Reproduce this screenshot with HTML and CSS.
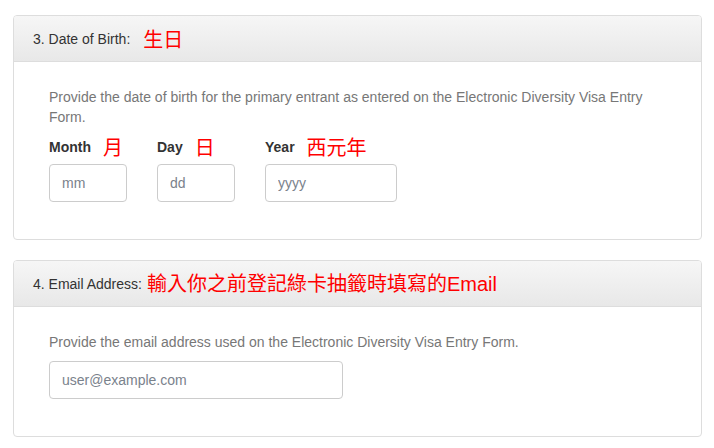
FILE: index.html
```html
<!DOCTYPE html>
<html lang="en">
  <head>
    <meta charset="UTF-8" />
    <meta name="viewport" content="width=device-width, initial-scale=1.0" />
    <title>DV Entrant Status Check</title>

    <link rel="stylesheet" href="styles.css">
  </head>
  <body>
    <div class="panel">
      <div class="panel-heading">
        <span>3. Date of Birth:</span>
        <span class="note note-birth">生日</span>
      </div>
      <div class="panel-body">
        <p class="help">Provide the date of birth for the primary entrant as entered on the Electronic Diversity Visa Entry Form.</p>
        <div class="dob">
          <div class="field">
            <label><span>Month</span><span class="note">月</span></label>
            <input type="text" class="input input-month" placeholder="mm">
          </div>
          <div class="field">
            <label><span>Day</span><span class="note">日</span></label>
            <input type="text" class="input input-day" placeholder="dd">
          </div>
          <div class="field">
            <label><span>Year</span><span class="note">西元年</span></label>
            <input type="text" class="input input-year" placeholder="yyyy">
          </div>
        </div>
      </div>
    </div>

    <div class="panel">
      <div class="panel-heading">
        <span>4. Email Address:</span>
        <span class="note note-email">輸入你之前登記綠卡抽籤時填寫的Email</span>
      </div>
      <div class="panel-body">
        <p class="help help-single">Provide the email address used on the Electronic Diversity Visa Entry Form.</p>
        <input type="text" class="input input-email" placeholder="user@example.com">
      </div>
    </div>
  </body>
</html>
```

FILE: styles.css
```css
* {
  box-sizing: border-box;
  margin: 0;
  padding: 0;
}

body {
  padding: 15px 12px 0 13px;
  background-color: #fff;
  font-family: "Liberation Sans", Arial, "Noto Sans CJK TC", sans-serif;
  font-size: 14px;
  color: #333;
}

.panel {
  border: 1px solid #ddd;
  border-radius: 4px;
  margin-bottom: 20px;
  background-color: #fff;
}

.panel-heading {
  height: 46px;
  display: flex;
  align-items: center;
  padding: 0 19px;
  border-bottom: 1px solid #ddd;
  border-radius: 3px 3px 0 0;
  background: linear-gradient(to bottom, #f6f6f6 0%, #e8e8e8 100%);
}

.note {
  color: #ff0000;
  font-family: "Noto Sans CJK TC", "Liberation Sans", sans-serif;
  font-size: 20px;
  font-weight: normal;
  line-height: 24px;
  margin-left: 12px;
}

.note-birth {
  margin-left: 13px;
}

.note-email {
  font-family: "Liberation Sans", "Noto Sans CJK TC", sans-serif;
  margin-left: 5px;
}

.panel-body {
  padding: 26px 35px 37px;
}

.help {
  color: #777;
  line-height: 19.5px;
  margin-bottom: 8px;
}

.dob {
  display: flex;
  gap: 30px;
}

.field label {
  display: flex;
  align-items: center;
  height: 24px;
  font-weight: bold;
  margin-bottom: 5px;
}

.input {
  display: block;
  height: 38px;
  padding: 0 12px;
  border: 1px solid #ccc;
  border-radius: 4px;
  font-family: "Liberation Sans", Arial, sans-serif;
  font-size: 14px;
  color: #555;
}

.input::placeholder {
  color: #7a828c;
}

.input-month,
.input-day {
  width: 78px;
}

.input-year {
  width: 132px;
}

.input-email {
  width: 294px;
}
```
